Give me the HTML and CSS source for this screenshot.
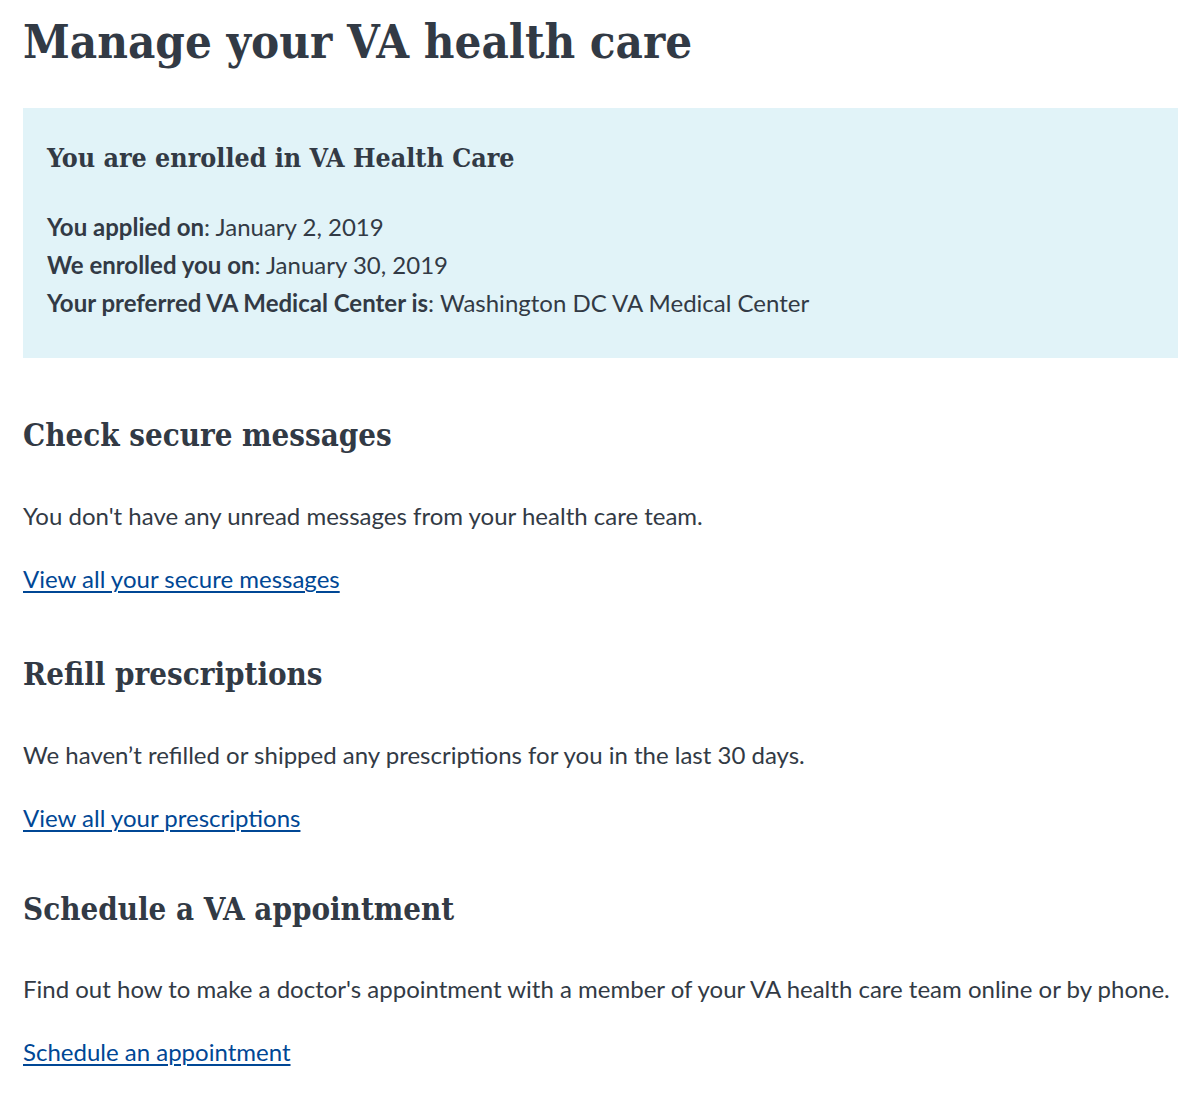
FILE: index.html
```html
<!DOCTYPE html>
<html lang="en">
<head>
<meta charset="utf-8">
<title>Manage your VA health care</title>
<link rel="stylesheet" href="styles.css">
</head>
<body>
<main class="page">
  <h1 class="page-title">Manage your VA health care</h1>

  <div class="alert">
    <h2 class="alert-heading">You are enrolled in VA Health Care</h2>
    <p class="alert-line"><strong>You applied on</strong>: January 2, 2019</p>
    <p class="alert-line"><strong>We enrolled you on</strong>: January 30, 2019</p>
    <p class="alert-line"><strong>Your preferred VA Medical Center is</strong>: Washington DC VA Medical Center</p>
  </div>

  <section class="section">
    <h2 class="section-title">Check secure messages</h2>
    <p class="section-text">You don't have any unread messages from your health care team.</p>
    <p class="section-linkline"><a class="section-link" href="#">View all your secure messages</a></p>
  </section>

  <section class="section">
    <h2 class="section-title">Refill prescriptions</h2>
    <p class="section-text">We haven’t refilled or shipped any prescriptions for you in the last 30 days.</p>
    <p class="section-linkline"><a class="section-link" href="#">View all your prescriptions</a></p>
  </section>

  <section class="section section-last">
    <h2 class="section-title">Schedule a VA appointment</h2>
    <p class="section-text">Find out how to make a doctor's appointment with a member of your VA health care team online or by phone.</p>
    <p class="section-linkline"><a class="section-link" href="#">Schedule an appointment</a></p>
  </section>
</main>
</body>
</html>
```

FILE: styles.css
```css
html, body {
  margin: 0;
  padding: 0;
  background: #ffffff;
}

body {
  color: #323a45;
  font-family: "Lato", "Liberation Sans", sans-serif;
  font-size: 24px;
}

.page {
  padding: 0 26px 0 23px;
}

.page-title {
  font-family: "DejaVu Serif Condensed", "DejaVu Serif", serif;
  font-weight: bold;
  font-size: 47px;
  line-height: 60px;
  margin: 12px 0 36px;
}

.alert {
  background: #e1f3f8;
  padding: 32px 24px 36px;
}

.alert-heading {
  font-family: "DejaVu Serif Condensed", "DejaVu Serif", serif;
  font-weight: bold;
  font-size: 26.6px;
  line-height: 36px;
  margin: 0 0 32px;
}

.alert-line {
  margin: 0;
  line-height: 38px;
}

.alert-line strong {
  font-weight: 700;
}

.section {
  margin-top: 57px;
}

.section + .section {
  margin-top: 56px;
}

.section + .section-last {
  margin-top: 52px;
}

.section-title {
  font-family: "DejaVu Serif Condensed", "DejaVu Serif", serif;
  font-weight: bold;
  font-size: 31px;
  line-height: 40px;
  margin: 0 0 42px;
}

.section-last .section-title {
  margin-bottom: 41px;
}

.section-text {
  margin: 0 0 25px;
  line-height: 38px;
}

.section-linkline {
  margin: 0;
  line-height: 38px;
}

.section-link {
  color: #004795;
  text-decoration: underline;
  text-decoration-thickness: 2px;
  text-underline-offset: 3px;
}
```
